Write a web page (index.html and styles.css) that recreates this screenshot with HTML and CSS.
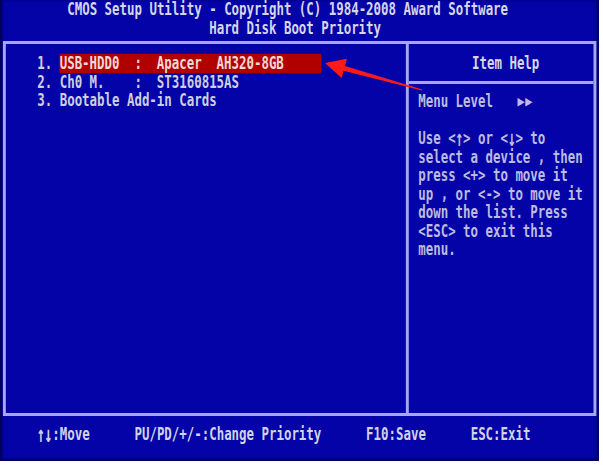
FILE: index.html
```html
<!DOCTYPE html>
<html lang="en">
<head>
    <meta charset="UTF-8">
    <meta name="viewport" content="width=device-width, initial-scale=1.0">
    <title>Hard Disk Boot Priority</title>
    <link rel="stylesheet" href="styles.css">
</head>
<body>
    <div class="monitor">
        <div class="screen">
            <header class="title">
                <div class="title-line">CMOS Setup Utility - Copyright (C) 1984-2008 Award Software</div>
                <div class="title-line sub">Hard Disk Boot Priority</div>
            </header>

            <div class="frame">
                <div class="menu">
                    <div class="item"><span class="num">1.</span><span class="device selected">USB-HDD0  :  Apacer  AH320-8GB</span></div>
                    <div class="item"><span class="num">2.</span><span class="device">Ch0 M.    :  ST3160815AS</span></div>
                    <div class="item"><span class="num">3.</span><span class="device">Bootable Add-in Cards</span></div>
                </div>

                <aside class="help">
                    <div class="help-title">Item Help</div>
                    <div class="help-body">
                        <div class="level">Menu Level   <span class="level-mark">▸▸</span></div>
                        <div class="help-text">Use &lt;<span class="arw">↑</span>&gt; or &lt;<span class="arw">↓</span>&gt; to
select a device , then
press &lt;+&gt; to move it
up , or &lt;-&gt; to move it
down the list. Press
&lt;ESC&gt; to exit this
menu.</div>
                    </div>
                </aside>
            </div>

            <footer class="keys">
                <span class="key move"><span class="arw">↑</span><span class="arw">↓</span>:Move</span>
                <span class="key prio">PU/PD/+/-:Change Priority</span>
                <span class="key save">F10:Save</span>
                <span class="key">ESC:Exit</span>
            </footer>
        </div>

        <!-- annotation arrow drawn over the screenshot -->
        <svg class="arrow" width="599" height="461" viewBox="0 0 599 461">
            <polygon points="325,63 347,58.8 345,66 422.3,89.4 421.8,90.6 343.6,70.8 341.6,78" fill="#ff1a1a"/>
        </svg>
    </div>
</body>
</html>
```

FILE: styles.css
```css
body {
    margin: 0;
    background-color: #ffffff;
    overflow: hidden;
}
.monitor {
    position: relative;
    width: 599px;
    height: 461px;
    overflow: hidden;
    background-color: #0303a8;
    box-shadow: inset 3px 0 3px -1px #000050, inset -3px 0 3px -1px #000060, inset 0 -3px 3px -1px #000060;
}
/* 80 column text mode, squeezed to the screen width */
.screen {
    width: 80ch;
    font-family: "DejaVu Sans Mono", monospace;
    font-size: 17px;
    font-weight: bold;
    line-height: 18.5px;
    color: #cfcfe2;
    transform: scaleX(0.73);
    transform-origin: 0 0;
}
.title {
    height: 37px;
    color: #d6d6e8;
}
.title-line {
    padding-left: 9ch;
    white-space: pre;
}
.title-line.sub {
    padding-left: 28ch;
}
.frame {
    box-sizing: border-box;
    height: 375px;
    margin: 4px 0.2ch 0 0.4ch;
    border: 3px solid #a6a6f2;
    border-left-width: 0.4ch;
    border-right-width: 0.4ch;
    display: grid;
    grid-template-columns: 53.5ch 1fr;
}
.menu {
    padding: 10.25px 0 0 4.2ch;
}
.item {
    white-space: pre;
}
.num {
    display: inline-block;
    width: 3ch;
}
.device {
    display: inline-block;
}
.selected {
    width: 35ch;
    background-color: #b00000;
    box-shadow: 0 0 2px #b00000;
    color: #f2d8d8;
}
.help {
    border-left: 0.4ch solid #a6a6f2;
    display: flex;
    flex-direction: column;
    color: #bcbce0;
}
.help-title {
    padding: 10.25px 0 7.75px 8.5ch;
    border-bottom: 3px solid #a6a6f2;
    color: #d6d6ea;
}
.help-body {
    padding: 8.6px 0 0 1.3ch;
}
.level {
    white-space: pre;
}
.level-mark {
    display: inline-block;
    letter-spacing: -3px;
    transform: scale(1.5, 1.3);
    transform-origin: 0 60%;
}
.help-text {
    margin-top: 18.5px;
    white-space: pre;
}
.arw {
    display: inline-block;
    width: 1ch;
    text-align: center;
    transform: scale(1.1, 1.35);
}
.keys {
    display: flex;
    margin-top: 9px;
    padding-left: 5ch;
    color: #d2d2e6;
    white-space: pre;
}
.key.move {
    width: 13ch;
}
.key.prio {
    width: 31ch;
}
.key.save {
    width: 14ch;
}
.arrow {
    position: absolute;
    top: 0;
    left: 0;
    pointer-events: none;
}
```
